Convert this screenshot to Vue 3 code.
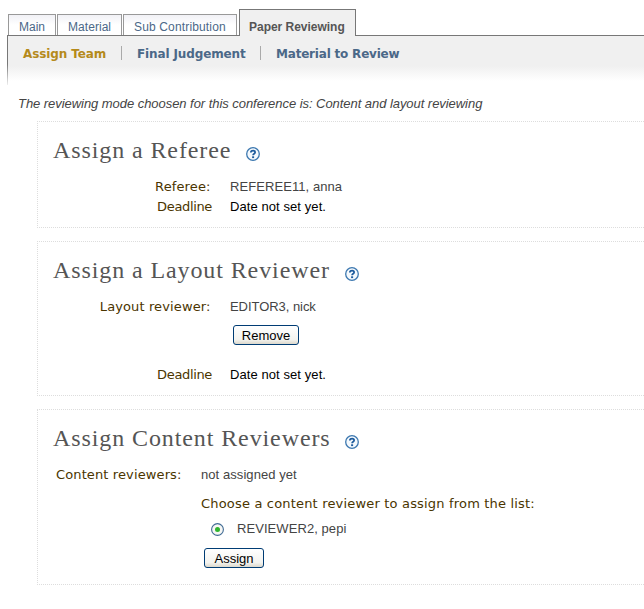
<script setup>
import { h } from 'vue'

const tabs = [
  { label: 'Main', cls: 'main' },
  { label: 'Material', cls: 'material' },
  { label: 'Sub Contribution', cls: 'sub' },
  { label: 'Paper Reviewing', cls: 'active' },
]

const HelpIcon = () =>
  h('svg', { width: 14, height: 14, viewBox: '0 0 14 14' }, [
    h('circle', { cx: 7, cy: 7, r: 6.3, fill: '#f4f9fd', stroke: '#3d78b0', 'stroke-width': 1.3 }),
    h('path', {
      d: 'M4.9 5.5V4.9Q5.1 3.6 7.1 3.6Q9.1 3.6 9.1 5.2Q9.1 6.1 8.1 6.7Q7.1 7.3 7.1 8.3',
      fill: 'none', stroke: '#1c5a9c', 'stroke-width': 1.8,
    }),
    h('rect', { x: 6.1, y: 9.3, width: 2, height: 1.8, fill: '#1c5a9c' }),
  ])
</script>

<template>
  <div class="page">
    <nav class="tabs">
      <a v-for="t in tabs" :key="t.label" class="tab" :class="t.cls"><span>{{ t.label }}</span></a>
    </nav>
    <div class="subbar">
      <div class="fade"></div>
      <span class="s1">Assign Team</span><i></i>
      <span class="s2">Final Judgement</span><i></i>
      <span class="s3">Material to Review</span>
    </div>
    <p class="mode">The reviewing mode choosen for this conference is: Content and layout reviewing</p>

    <section class="box referee">
      <h2><span>Assign a Referee</span><HelpIcon /></h2>
      <div class="row"><span class="label colon">Referee:</span><span class="value">REFEREE11, anna</span></div>
      <div class="row"><span class="label deadline">Deadline</span><span class="value date">Date not set yet.</span></div>
    </section>

    <section class="box layout">
      <h2><span>Assign a Layout Reviewer</span><HelpIcon /></h2>
      <div class="row"><span class="label colon">Layout reviewer:</span><span class="value editor">EDITOR3, nick</span></div>
      <button class="remove"><span>Remove</span></button>
      <div class="row"><span class="label deadline">Deadline</span><span class="value date">Date not set yet.</span></div>
    </section>

    <section class="box content">
      <h2><span>Assign Content Reviewers</span><HelpIcon /></h2>
      <div class="row"><span class="label colon">Content reviewers:</span><span class="value">not assigned yet</span></div>
      <div class="choose"><span>Choose a content reviewer to assign from the list:</span></div>
      <div class="option">
        <svg width="13" height="13" viewBox="0 0 13 13">
          <circle cx="6.5" cy="6.5" r="5.9" fill="#f7f7f4" stroke="#3f6a94" stroke-width="1.1" />
          <circle cx="6.5" cy="6.5" r="2.5" fill="#2fb52f" />
        </svg>
        <span>REVIEWER2, pepi</span>
      </div>
      <button class="assign"><span>Assign</span></button>
    </section>
  </div>
</template>

<style>
body { margin: 0; background: #fff; overflow: hidden; }
</style>

<style scoped>
.page { width: 644px; height: 609px; overflow: hidden; box-sizing: border-box; padding-top: 9px; font: 13px "Liberation Sans", Arial, sans-serif; color: #444; }
.page span { white-space: nowrap; }
.tabs { display: flex; align-items: flex-end; height: 27px; padding-left: 8px; position: relative; z-index: 1; }
.tab { box-sizing: border-box; height: 21px; margin: 0 1px 1px 0; border: 1px solid #999; border-bottom: 0; background: linear-gradient(#f1f1f6, #fff 10px); color: #4b6888; font-size: 12px; line-height: 24px; padding-left: 10px; }
.main { width: 48px; }
.material { width: 65px; }
.sub { width: 114px; margin-right: 2px; }
.tab.active { width: 117px; height: 27px; margin: 0; border-color: #777; background: #f0f0f0; color: #555; font-weight: bold; line-height: 34px; padding-left: 9px; }
.material span { letter-spacing: .05px; }
.sub span { letter-spacing: .15px; }
.active span { letter-spacing: -.02px; }
.subbar { display: flex; align-items: flex-start; height: 49px; margin: -1px 0 0 7px; border-top: 1px solid #777; box-sizing: border-box; position: relative; background: linear-gradient(#f0f0f0 30px, #fff 45px); padding: 10px 0 0 16px; font: bold 12px/16px "DejaVu Sans", Verdana, sans-serif; color: #4b6888; }
.fade { position: absolute; left: 0; top: 0; width: 1px; height: 49px; background: linear-gradient(#777 28px, #eee); }
.subbar i { width: 1px; height: 14px; background: #aaa; }
.s1 { color: #b58a1b; width: 98px; letter-spacing: -.1px; }
.s2 { width: 123px; padding-left: 15px; letter-spacing: -.13px; }
.s3 { padding-left: 15px; letter-spacing: -.2px; }
.mode { margin: 11px 0 0 18px; height: 16px; line-height: 17px; font-style: italic; white-space: nowrap; letter-spacing: -.05px; }
.box { box-sizing: border-box; margin-left: 37px; border: 1px dotted #ddd; border-right: 0; padding-top: 13px; }
.referee { margin-top: 10px; height: 107px; }
.layout { margin-top: 13px; height: 155px; }
.content { margin-top: 13px; height: 176px; }
h2 { display: flex; align-items: flex-start; margin: 0; height: 42px; padding-left: 15px; font: 24px/30px "Liberation Serif", "Times New Roman", serif; color: #555; }
h2 svg { margin: 12px 0 0 15px; }
.content h2 svg { margin-left: 14px; }
h2 span { letter-spacing: .9px; }
.row { display: grid; grid-template-columns: 174px 1fr; column-gap: 18px; height: 20px; line-height: 20px; }
.label { justify-self: end; font-family: "DejaVu Sans", Verdana, sans-serif; color: #4a3500; }
.colon { margin-right: 1.5px; letter-spacing: .12px; }
.deadline { letter-spacing: -.35px; }
.value { color: #444; letter-spacing: .07px; }
.editor { letter-spacing: -.05px; }
.date { color: #000; letter-spacing: .08px; }
button { display: block; box-sizing: border-box; height: 20px; padding: 0; border: 1px solid #003c74; border-radius: 3px; background: linear-gradient(#fff, #f3f3ef 75%, #dcd8cc); color: #000; font: 13px/19px "Liberation Sans", Arial, sans-serif; text-align: center; }
button span { display: block; height: 18px; }
.remove { width: 66px; margin: 8px 0 20px 195px; }
.content .row { grid-template-columns: 145px 1fr; }
.choose { padding-left: 163px; margin-top: 9px; height: 20px; line-height: 20px; color: #4a3500; font-family: "DejaVu Sans", Verdana, sans-serif; letter-spacing: .18px; }
.option { display: flex; margin: 5px 0 0 173px; height: 20px; line-height: 20px; letter-spacing: .07px; }
.option svg { margin: 4px 13px 0 0; }
.assign { width: 60px; margin: 9px 0 0 166px; }
</style>
